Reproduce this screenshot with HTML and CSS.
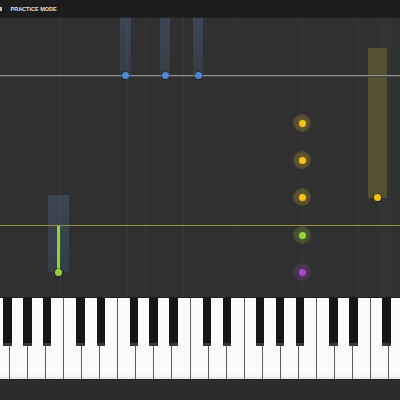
FILE: index.html
```html
<!DOCTYPE html>
<html>
<head>
<meta charset="utf-8">
<link rel="stylesheet" href="styles.css">
</head>
<body>
<div class="app">
  <header class="topbar">
    <span class="sep"></span>
    <span class="mode">PRACTICE MODE</span>
  </header>
  <main class="roll">
    <div class="vline" style="left:60px"></div>
    <div class="vline" style="left:127px"></div>
    <div class="vline" style="left:145px"></div>
    <div class="vline" style="left:183px"></div>
    <div class="vline" style="left:237px"></div>
    <div class="vline" style="left:302px"></div>
    <div class="vline" style="left:358px"></div>
    <div class="vline dark" style="left:378px"></div>

    <div class="bar blue" style="left:120px;top:0;width:11px;height:57px"></div>
    <div class="bar blue" style="left:160px;top:0;width:10px;height:57px"></div>
    <div class="bar blue" style="left:193px;top:0;width:10px;height:57px"></div>
    <div class="bar yellow" style="left:368px;top:30px;width:19px;height:150px"></div>
    <div class="bar blue" style="left:48px;top:177px;width:21px;height:77px"></div>
    <div class="stem" style="left:57px;top:207px;height:47px"></div>

    <div class="hline grey" style="top:57px"></div>
    <div class="hline olive" style="top:207px"></div>

    <div class="dot blue" style="left:125px;top:57px"></div>
    <div class="dot blue" style="left:165px;top:57px"></div>
    <div class="dot blue" style="left:198px;top:57px"></div>
    <div class="dot yellow" style="left:377px;top:179px"></div>
    <div class="dot green" style="left:58px;top:254px"></div>

    <div class="glow yellow" style="left:302px;top:105px"></div>
    <div class="glow yellow" style="left:302px;top:142px"></div>
    <div class="glow yellow" style="left:302px;top:179px"></div>
    <div class="glow green" style="left:302px;top:217px"></div>
    <div class="glow purple" style="left:302px;top:254px"></div>
  </main>
  <section class="keyboard">
    <div class="keys">
      <div class="wk"><div class="bk fs"></div></div>
      <div class="wk"><div class="bk gs"></div></div>
      <div class="wk"><div class="bk as"></div></div>
      <div class="wk"></div>
      <div class="wk"><div class="bk cs"></div></div>
      <div class="wk"><div class="bk ds"></div></div>
      <div class="wk"></div>
      <div class="wk"><div class="bk fs"></div></div>
      <div class="wk"><div class="bk gs"></div></div>
      <div class="wk"><div class="bk as"></div></div>
      <div class="wk"></div>
      <div class="wk"><div class="bk cs"></div></div>
      <div class="wk"><div class="bk ds"></div></div>
      <div class="wk"></div>
      <div class="wk"><div class="bk fs"></div></div>
      <div class="wk"><div class="bk gs"></div></div>
      <div class="wk"><div class="bk as"></div></div>
      <div class="wk"></div>
      <div class="wk"><div class="bk cs"></div></div>
      <div class="wk"><div class="bk ds"></div></div>
      <div class="wk"></div>
      <div class="wk"><div class="bk fs"></div></div>
      <div class="wk"></div>
    </div>
  </section>
  <footer class="bottombar"></footer>
</div>
</body>
</html>
```

FILE: styles.css
```css
* { box-sizing: border-box; }
html, body { margin: 0; padding: 0; }
body {
  width: 400px;
  height: 400px;
  overflow: hidden;
  background: #2b2b2b;
  font-family: "Liberation Sans", Arial, sans-serif;
}
.app {
  display: flex;
  flex-direction: column;
  width: 400px;
  height: 400px;
}
.topbar {
  height: 18px;
  flex: none;
  background: #1c1c1c;
  display: flex;
  align-items: center;
  gap: 9px;
  color: #e0e0e0;
  font-weight: 700;
  font-size: 5.5px;
  border-bottom: 1px solid #262626;
}
.sep {
  width: 1.5px;
  height: 4px;
  background: #bdbdbd;
}

.roll {
  flex: none;
  height: 279px;
  position: relative;
  background: #303030;
  overflow: hidden;
}
.vline {
  position: absolute;
  top: 0;
  bottom: 0;
  width: 1px;
  background: rgba(255,255,255,0.035);
}
.vline.dark { width: 13px; background: rgba(70,78,92,0.1); }

.hline {
  position: absolute;
  left: 0;
  right: 0;
  height: 1px;
}
.hline.grey { background: #8e8e8e; box-shadow: 0 1px 0 #4a4a4a; }
.hline.olive { background: #8f8f3c; }

.bar { position: absolute; }
.bar.blue {
  background: linear-gradient(rgba(95,130,185,0.26), rgba(95,130,185,0.16));
}
.bar.yellow { background: #55502f; }
.stem {
  position: absolute;
  width: 2.5px;
  background: #8ad82a;
}

.dot {
  position: absolute;
  width: 7px;
  height: 7px;
  margin: -3.5px 0 0 -3.5px;
  border-radius: 50%;
  box-shadow: 0 0 0 1px rgba(0,0,0,0.25);
}
.dot.blue { background: #4f86d6; }
.dot.yellow { background: #f4c313; }
.dot.green { background: #94d63a; }

.glow {
  position: absolute;
  width: 18px;
  height: 18px;
  margin: -9px 0 0 -9px;
  border-radius: 50%;
  display: flex;
  align-items: center;
  justify-content: center;
}
.glow::after {
  content: "";
  width: 7px;
  height: 7px;
  border-radius: 50%;
}
.glow.yellow { background: radial-gradient(circle, rgba(215,180,40,0.3) 30%, rgba(215,180,40,0.1) 100%); }
.glow.yellow::after { background: #f4c313; }
.glow.green { background: radial-gradient(circle, rgba(150,210,60,0.26) 30%, rgba(150,210,60,0.08) 100%); }
.glow.green::after { background: #94d63a; }
.glow.purple { background: radial-gradient(circle, rgba(160,70,200,0.26) 30%, rgba(160,70,200,0.08) 100%); }
.glow.purple::after { background: #a548c9; }

.keyboard {
  height: 83px;
  flex: none;
  overflow: hidden;
  border-top: 1px solid #1e1e1e;
  border-bottom: 1px solid #222;
}
.keys {
  display: flex;
  width: 415px;
  height: 100%;
  margin-left: -8px;
}
.wk {
  flex: 1;
  position: relative;
  background: linear-gradient(#fbfbfb 94%, #e6e6e6);
  border-right: 1.3px solid #5c5c5c;
}
.bk {
  position: absolute;
  top: 0;
  width: 8.5px;
  height: 48px;
  background: #161616;
  border-bottom: 3px solid #3a3a3a;
  z-index: 1;
}
.bk.fs { left: calc(100% - 5.75px); }
.bk.gs { left: calc(100% - 4px); }
.bk.as { left: calc(100% - 2.25px); }
.bk.cs { left: calc(100% - 4.75px); }
.bk.ds { left: calc(100% - 2.75px); }

.bottombar {
  flex: 1;
  background: #2b2b2b;
}
```
